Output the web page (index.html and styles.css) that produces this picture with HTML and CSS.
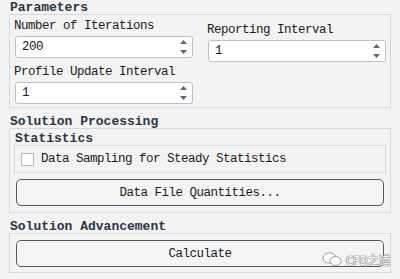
FILE: index.html
```html
<!DOCTYPE html>
<html lang="en">
<head>
    <meta charset="UTF-8">
    <meta name="viewport" content="width=device-width, initial-scale=1.0">
    <title>Run Calculation</title>
    <link rel="stylesheet" href="styles.css">
</head>
<body>
    <div class="panel">
        <h2 class="group-title">Parameters</h2>
        <div class="group params">
            <div class="col">
                <label class="field-label">Number of Iterations</label>
                <div class="spin">
                    <input class="spin-input" type="text" value="200">
                    <svg class="spin-arrows" width="9" height="16" viewBox="0 0 9 16"><path d="M4.5 1 L8 5 H1 Z M4.5 15 L8 11 H1 Z" fill="#5f6670"/></svg>
                </div>
                <label class="field-label gap">Profile Update Interval</label>
                <div class="spin">
                    <input class="spin-input" type="text" value="1">
                    <svg class="spin-arrows" width="9" height="16" viewBox="0 0 9 16"><path d="M4.5 1 L8 5 H1 Z M4.5 15 L8 11 H1 Z" fill="#5f6670"/></svg>
                </div>
            </div>
            <div class="col shifted">
                <label class="field-label">Reporting Interval</label>
                <div class="spin">
                    <input class="spin-input" type="text" value="1">
                    <svg class="spin-arrows" width="9" height="16" viewBox="0 0 9 16"><path d="M4.5 1 L8 5 H1 Z M4.5 15 L8 11 H1 Z" fill="#5f6670"/></svg>
                </div>
            </div>
        </div>

        <h2 class="group-title">Solution Processing</h2>
        <div class="group processing">
            <h3 class="sub-title">Statistics</h3>
            <div class="subgroup">
                <span class="checkbox"></span>
                <span class="check-label">Data Sampling for Steady Statistics</span>
            </div>
            <button class="btn">Data File Quantities...</button>
        </div>

        <h2 class="group-title">Solution Advancement</h2>
        <div class="group advancement">
            <button class="btn">Calculate</button>
        </div>
    </div>

    <div class="watermark">
        <svg width="20" height="15" viewBox="0 0 20 15"><ellipse cx="7.5" cy="6" rx="6.5" ry="5.2" fill="#fff" stroke="#999" stroke-width="1"/><ellipse cx="13.5" cy="9" rx="5.5" ry="4.5" fill="#fff" stroke="#999" stroke-width="1"/></svg>
        <span>CFD之道</span>
    </div>
</body>
</html>
```

FILE: styles.css
```css
body {
    margin: 0;
    width: 400px;
    height: 279px;
    background: #f3f3f3;
    font-family: "Liberation Mono", "Noto Sans CJK SC", monospace;
    font-size: 12.5px;
    letter-spacing: -0.5px;
    color: #1a1a1a;
    position: relative;
    overflow: hidden;
}

.panel {
    padding: 0 9px;
}

.group-title {
    margin: 6px 0 0;
    padding: 1px 1px 0;
    font-size: 13px;
    line-height: 13px;
    font-weight: bold;
    letter-spacing: 0;
    color: #2b3546;
}

.group-title:first-child {
    margin-top: 0;
}

.group {
    border: 1px solid #d3d8e4;
}

/* parameters */
.params {
    display: grid;
    grid-template-columns: minmax(0, 1fr) minmax(0, 1fr);
    column-gap: 14px;
    padding: 3px 4px 3px;
}

.col {
    display: flex;
    flex-direction: column;
    min-width: 0;
}

.col.shifted {
    margin-top: 4px;
}

.field-label {
    line-height: 16px;
    height: 16px;
    white-space: nowrap;
}

.field-label.gap {
    margin-top: 6px;
}

.spin {
    display: flex;
    align-items: center;
    height: 20px;
    margin: 2px 0 0 1px;
    background: #fff;
    border: 1px solid #b9c0cc;
    border-radius: 3px;
}

.spin-input {
    flex: 1;
    width: 0;
    min-width: 0;
    border: none;
    background: transparent;
    font: inherit;
    letter-spacing: inherit;
    color: #1a1a1a;
    padding: 0 0 0 6px;
    outline: none;
}

.spin-arrows {
    margin-right: 4px;
}

/* processing */
.processing {
    padding: 3px 0 6px;
}

.sub-title {
    margin: 0;
    padding: 1px 5px 0;
    font-size: 13px;
    line-height: 12px;
    font-weight: bold;
    letter-spacing: 0;
    color: #2b3546;
}

.subgroup {
    display: flex;
    align-items: center;
    height: 26px;
    margin: 0 4px;
    border: 1px solid #d7dbe4;
}

.checkbox {
    width: 11px;
    height: 11px;
    margin-left: 6px;
    border: 1px solid #b8b8b8;
    background: #fff;
}

.check-label {
    margin-left: 7px;
}

.btn {
    display: block;
    width: calc(100% - 12px);
    height: 27px;
    margin: 6px 6px 0;
    padding: 0;
    background: #f4f4f4;
    border: 1.5px solid #4f5866;
    border-radius: 5px;
    font: inherit;
    letter-spacing: inherit;
    color: #1a1a1a;
    text-align: center;
}

.advancement {
    padding: 0 0 5px;
}

.watermark {
    position: absolute;
    right: 10px;
    bottom: 11px;
    display: flex;
    align-items: center;
    gap: 4px;
    font-family: "Noto Sans CJK SC", sans-serif;
    font-size: 12px;
    color: #fff;
    text-shadow: 0 0 1px #666, 0 0 1px #666, 0 0 1px #666;
}
```
